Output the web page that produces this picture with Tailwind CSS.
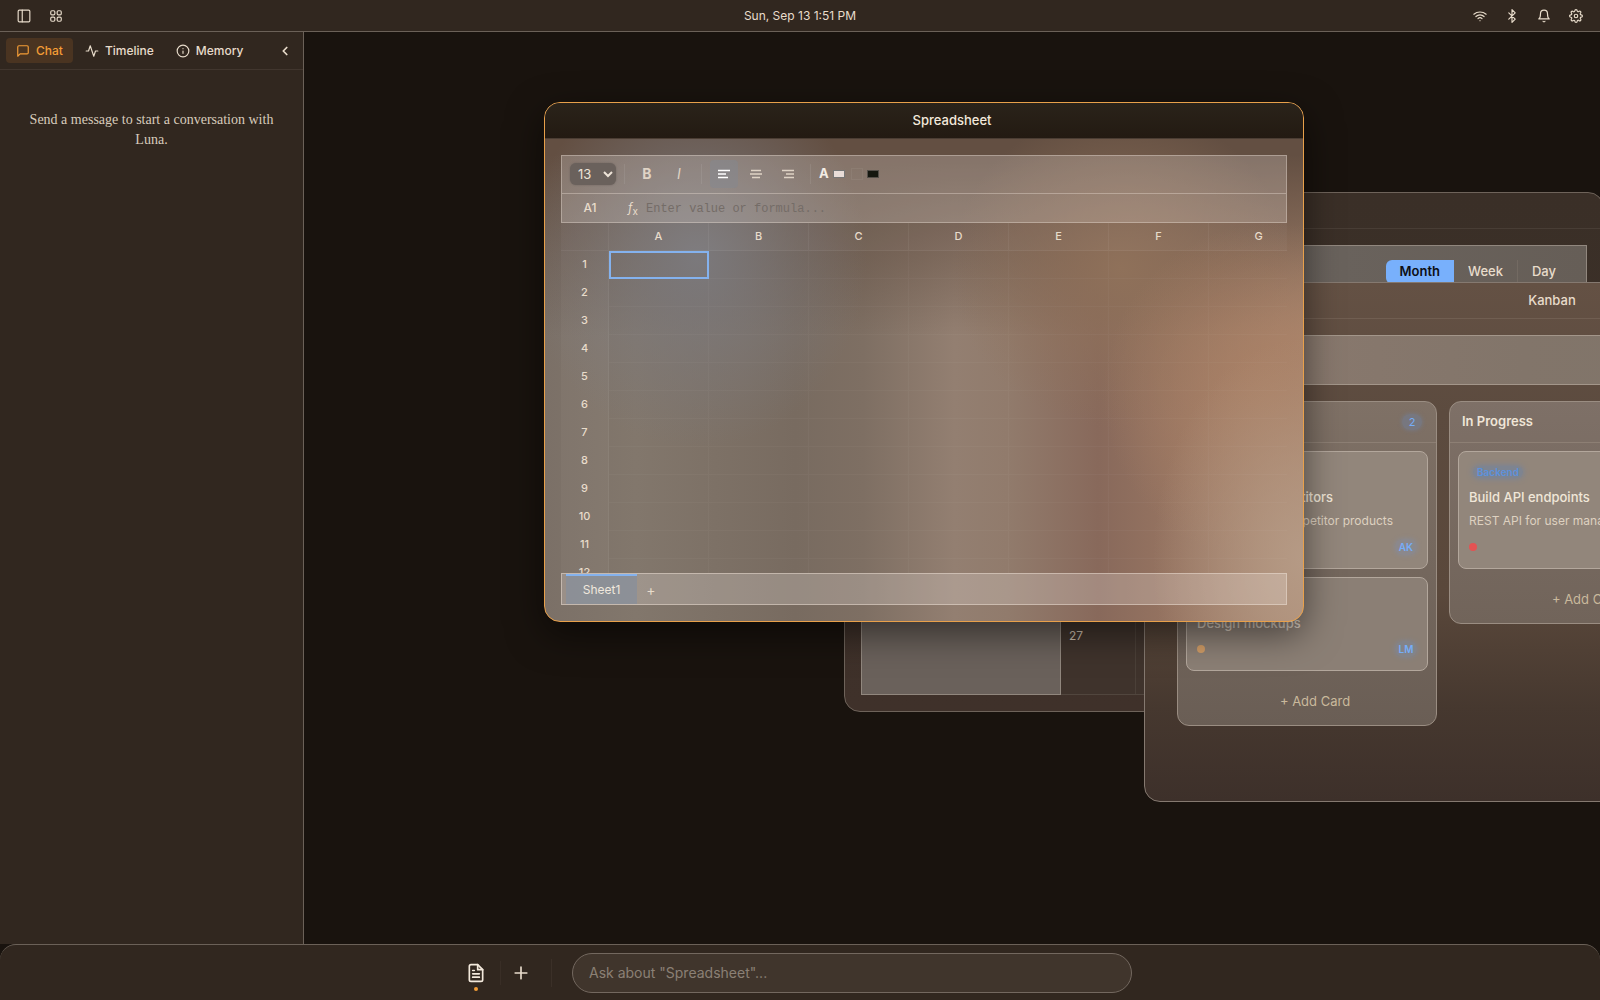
<!DOCTYPE html>
<html lang="en">
<head>
    <meta charset="UTF-8">
    <meta name="viewport" content="width=device-width, initial-scale=1.0">
    <title>Luna</title>
    <script src="https://cdn.jsdelivr.net/npm/@tailwindcss/browser@4"></script>
</head>
<body class="h-screen flex flex-col overflow-hidden bg-[#19130e] text-[#e8dccb] font-['Inter',sans-serif] text-[13px]">

<!-- Menu bar -->
<header class="h-8 shrink-0 grid grid-cols-3 items-center px-4 bg-[#31271f] border-b border-[#6b6158]">
    <div class="flex gap-4">
        <button aria-label="Toggle sidebar" class="size-4 grid place-items-center">
            <svg class="size-3.5" fill="none" stroke="currentColor" stroke-width="2" stroke-linecap="round" stroke-linejoin="round" viewBox="0 0 24 24"><rect x="2" y="2" width="20" height="20" rx="2"/><path d="M9 2v20"/></svg>
        </button>
        <button aria-label="Apps" class="size-4 grid place-items-center">
            <svg class="size-3.5" fill="none" stroke="currentColor" stroke-width="2" viewBox="0 0 24 24"><rect x="3" y="3" width="7" height="7" rx="2"/><rect x="14" y="3" width="7" height="7" rx="2"/><rect x="3" y="14" width="7" height="7" rx="2"/><rect x="14" y="14" width="7" height="7" rx="2"/></svg>
        </button>
    </div>
    <time class="text-center text-xs">Sun, Sep 13 1:51 PM</time>
    <div class="flex justify-end gap-4">
        <button aria-label="Wi-Fi" class="size-4 grid place-items-center">
            <svg class="size-3.5" fill="none" stroke="currentColor" stroke-width="2" stroke-linecap="round" viewBox="0 0 24 24"><path d="M1.500 9a16 16 0 0 1 21 0"/><path d="M5 12.900a10 10 0 0 1 14 0"/><path d="M8.500 16.400a5 5 0 0 1 7 0"/><path d="M12 20h.01"/></svg>
        </button>
        <button aria-label="Bluetooth" class="size-4 grid place-items-center">
            <svg class="size-3.5" fill="none" stroke="currentColor" stroke-width="2" stroke-linecap="round" stroke-linejoin="round" viewBox="0 0 24 24"><path d="m6.500 6.500 11 11L12 23V1l5.500 5.500-11 11"/></svg>
        </button>
        <button aria-label="Notifications" class="size-4 grid place-items-center">
            <svg class="size-3.5" fill="none" stroke="currentColor" stroke-width="2" stroke-linecap="round" stroke-linejoin="round" viewBox="0 0 24 24"><path d="M18 8A6 6 0 0 0 6 8c0 7-3 9-3 9h18s-3-2-3-9"/><path d="M13.700 21a2 2 0 0 1-3.400 0"/></svg>
        </button>
        <button aria-label="Settings" class="size-4 grid place-items-center">
            <svg class="size-3.5" fill="none" stroke="currentColor" stroke-width="2" stroke-linejoin="round" viewBox="0 0 24 24"><circle cx="12" cy="12" r="3"/><path d="M19.4 15a1.65 1.65 0 0 0 .33 1.82l.06.06a2 2 0 0 1 0 2.83 2 2 0 0 1-2.83 0l-.06-.06a1.65 1.65 0 0 0-1.82-.33 1.65 1.65 0 0 0-1 1.51V21a2 2 0 0 1-2 2 2 2 0 0 1-2-2v-.09A1.65 1.65 0 0 0 9 19.4a1.65 1.65 0 0 0-1.82.33l-.06.06a2 2 0 0 1-2.83 0 2 2 0 0 1 0-2.83l.06-.06a1.65 1.65 0 0 0 .33-1.82 1.65 1.65 0 0 0-1.51-1H3a2 2 0 0 1-2-2 2 2 0 0 1 2-2h.09A1.65 1.65 0 0 0 4.6 9a1.65 1.65 0 0 0-.33-1.82l-.06-.06a2 2 0 0 1 0-2.83 2 2 0 0 1 2.83 0l.06.06a1.65 1.65 0 0 0 1.82.33H9a1.65 1.65 0 0 0 1-1.51V3a2 2 0 0 1 2-2 2 2 0 0 1 2 2v.09a1.65 1.65 0 0 0 1 1.51 1.65 1.65 0 0 0 1.82-.33l.06-.06a2 2 0 0 1 2.83 0 2 2 0 0 1 0 2.83l-.06.06a1.65 1.65 0 0 0-.33 1.82V9a1.65 1.65 0 0 0 1.51 1H21a2 2 0 0 1 2 2 2 2 0 0 1-2 2h-.09a1.65 1.65 0 0 0-1.51 1z"/></svg>
        </button>
    </div>
</header>

<div class="flex flex-1 min-h-0">
    <!-- Sidebar -->
    <aside class="w-76 shrink-0 bg-[#31271f] border-r border-[#6b6158]">
        <nav class="flex items-center gap-0.5 p-1.5 border-b border-[#41362e] text-xs font-medium">
            <button class="flex items-center gap-1.5 px-2.5 h-[25px] rounded bg-[#4a3421] text-[#f39c36]">
                <svg class="size-3.5" fill="none" stroke="currentColor" stroke-width="2" stroke-linejoin="round" viewBox="0 0 24 24"><path d="M21 15a2 2 0 0 1-2 2H7l-4 4V5a2 2 0 0 1 2-2h14a2 2 0 0 1 2 2z"/></svg>
                Chat
            </button>
            <button class="flex items-center gap-1.5 px-2.5 h-[25px] rounded">
                <svg class="size-3.5" fill="none" stroke="currentColor" stroke-width="2" stroke-linecap="round" stroke-linejoin="round" viewBox="0 0 24 24"><path d="M22 12h-4l-3 9L9 3l-3 9H2"/></svg>
                Timeline
            </button>
            <button class="flex items-center gap-1.5 px-2.5 h-[25px] rounded">
                <svg class="size-3.5" fill="none" stroke="currentColor" stroke-width="2" stroke-linecap="round" viewBox="0 0 24 24"><circle cx="12" cy="12" r="10"/><path d="M12 16v-4M12 8h.01"/></svg>
                Memory
            </button>
            <button aria-label="Collapse" class="ml-auto size-6 grid place-items-center">
                <svg class="size-3.5" fill="none" stroke="currentColor" stroke-width="3" stroke-linecap="round" stroke-linejoin="round" viewBox="0 0 24 24"><path d="m15 18-6-6 6-6"/></svg>
            </button>
        </nav>
        <p class="px-6 pt-10 text-center text-sm leading-5 text-[#d8ccbc] font-['Liberation_Serif',serif]">Send a message to start a conversation with Luna.</p>
    </aside>

    <!-- Desktop -->
    <main class="relative flex-1 overflow-hidden">

        <!-- Calendar window -->
        <section class="absolute left-[540px] top-40 w-[760px] h-[520px] flex flex-col rounded-2xl overflow-hidden border border-[#6e635a] bg-linear-to-b from-[#3a2f27] to-[#3f312a]">
            <div class="h-9 shrink-0 border-b border-[#483d35]"></div>
            <div class="flex-1 flex flex-col p-4">
                <div class="h-[52px] shrink-0 flex justify-end items-center px-4 pt-0.5 border border-[#91877e] bg-linear-to-r from-[#6f6a66] to-[#665e57]">
                    <div class="flex h-6 rounded-md overflow-hidden font-medium text-[#e8dccb]">
                        <button class="px-3.5 bg-[#78b0fc] text-[#0d0f14] font-semibold">Month</button>
                        <button class="px-3.5">Week</button>
                        <button class="px-3.5 border-l border-[#736a62]">Day</button>
                    </div>
                </div>
                <div class="flex-1 flex">
                    <div class="w-50 border border-[#91877e] bg-[#6a615b]"></div>
                    <div class="flex-1 grid grid-cols-7 items-end border-b border-[#51463e] bg-[#3f332c]">
                        <div class="h-[76px] px-2 py-2.5 border-r border-[#4b4038] text-xs text-[#cbbfae]">27</div>
                    </div>
                </div>
            </div>
        </section>

        <!-- Kanban window -->
        <section class="absolute left-[840px] top-[250px] w-[760px] h-[520px] flex flex-col rounded-2xl overflow-hidden border border-[#857970] bg-[linear-gradient(180deg,#645144_0%,#5c4b3f_25%,#5a483b_60%,#46382f_82%,#3d302a_100%)]">
            <div class="h-9 shrink-0 pl-14 grid place-items-center border-b border-[#705e51] font-medium">Kanban</div>
            <div class="flex-1 flex flex-col p-4">
                <div class="h-[50px] shrink-0 border border-[#a3968a] bg-linear-to-r from-[#8c7a6f] via-[#82756a] to-[#7e7468]"></div>
                <div class="flex items-start gap-3 p-4">
                    <div class="w-65 shrink-0 rounded-xl border border-[#9a8d82] bg-linear-to-b from-[#7f7166] to-[#6a5e55]">
                        <div class="h-[41px] flex items-center justify-between px-3 border-b border-[#8d7f74]">
                            <h3 class="font-semibold text-[#f0e6d8]">To Do</h3>
                            <span class="w-5 mr-0.5 rounded-full text-center text-[11px] leading-4 bg-[#757a8a]/70 shadow-[0_0_4px_#757a8a] text-[#76adf8]">2</span>
                        </div>
                        <div class="flex flex-col gap-2 p-2">
                            <article class="p-2.5 rounded-lg border border-[#b3a79c] bg-[#92867b]">
                                <div class="h-5"></div>
                                <h4 class="mt-1.5 leading-[18px] font-medium text-[#f0e6d8]">Research competitors</h4>
                                <p class="mt-1.5 text-xs leading-[18px] text-[#ded1c0]">Analyze top 5 competitor products</p>
                                <div class="mt-1.5 h-[22px] flex items-center justify-between">
                                    <span class="size-2 rounded-full bg-[#78b0fc]"></span>
                                    <span class="w-[22px] text-center text-[10px] leading-4 rounded-full font-semibold bg-[#878b98]/60 shadow-[0_0_5px_#878b98] text-[#76adf8]">AK</span>
                                </div>
                            </article>
                            <article class="p-2.5 rounded-lg border border-[#b3a79c] bg-[#8b7f75]">
                                <div class="h-5"></div>
                                <h4 class="mt-1.5 leading-[18px] font-medium text-[#d4c8bb]">Design mockups</h4>
                                <div class="mt-1.5 h-[22px] flex items-center justify-between">
                                    <span class="size-2 rounded-full bg-[#d09c66]"></span>
                                    <span class="w-[22px] text-center text-[10px] leading-4 rounded-full font-semibold bg-[#7f8694]/60 shadow-[0_0_5px_#7f8694] text-[#76adf8]">LM</span>
                                </div>
                            </article>
                        </div>
                        <button class="w-full h-[46px] pl-4 text-[#c9b99c]">+ Add Card</button>
                    </div>
                    <div class="w-65 shrink-0 rounded-xl border border-[#9a8d82] bg-linear-to-b from-[#7e7067] to-[#71645a]">
                        <div class="h-[41px] flex items-center justify-between px-3 border-b border-[#8d7f74]">
                            <h3 class="font-semibold text-[#f0e6d8]">In Progress</h3>
                        </div>
                        <div class="flex flex-col gap-2 p-2">
                            <article class="p-2.5 rounded-lg border border-[#b3a79c] bg-[#92867b]">
                                <div class="h-5 flex items-center">
                                    <span class="ml-1 px-1 rounded-full text-[10px] leading-3 font-semibold bg-[#71839f]/60 shadow-[0_0_6px_#71839f] text-[#5c91dc]">Backend</span>
                                </div>
                                <h4 class="mt-1.5 leading-[18px] font-medium text-[#f0e6d8]">Build API endpoints</h4>
                                <p class="mt-1.5 text-xs leading-[18px] text-[#ded1c0] whitespace-nowrap">REST API for user management</p>
                                <div class="mt-1.5 h-[22px] flex items-center">
                                    <span class="size-2 rounded-full bg-[#e35353]"></span>
                                </div>
                            </article>
                        </div>
                        <button class="w-full h-[46px] pl-4 text-[#c9b99c]">+ Add Card</button>
                    </div>
                </div>
            </div>
        </section>

        <!-- Spreadsheet window -->
        <section class="absolute left-60 top-[70px] w-[760px] h-[520px] flex flex-col rounded-2xl overflow-hidden border border-[#e8a04a] shadow-[0_12px_36px_rgba(0,0,0,0.5)] bg-[radial-gradient(ellipse_170px_190px_at_20%_30%,#7b797c_0%,#7b797c00_100%),radial-gradient(ellipse_150px_220px_at_100%_88%,#b59a85_0%,#b59a8500_100%),radial-gradient(ellipse_170px_170px_at_96%_56%,#a98065_0%,#a9806500_100%),radial-gradient(ellipse_170px_160px_at_76%_32%,#8f715a_0%,#8f715a00_100%),linear-gradient(180deg,#634f42_0%,#634f42_10%,#634f4200_45%),linear-gradient(90deg,#7b7067_0%,#82776c_12%,#786b60_33%,#7e6f63_42%,#937f71_54%,#917b6c_61%,#88695b_73%,#967461_83%,#a98770_100%)]">
            <div class="h-9 shrink-0 pl-14 grid place-items-center border-b border-[#4b3d33] bg-linear-to-b from-[#2a231a] to-[#231a12] font-medium text-[#f3e9dc]">Spreadsheet</div>
            <div class="flex-1 min-h-0 flex flex-col p-4">
                <div class="border border-[#e9ddd2]/40 bg-[#f3ece8]/24">
                    <div class="h-[38px] flex items-center gap-1 px-2 pb-0.5 border-b border-[#e9ddd2]/40">
                        <select aria-label="Font size" class="w-[46px] h-[22px] pl-1 rounded-md bg-[#6a615c] text-[#eee4d8] text-[13px] shadow-[0_0_2px_#6a615c]">
                            <option>13</option>
                        </select>
                        <span class="mx-1 w-px h-5 bg-white/8"></span>
                        <button class="size-7 font-bold text-sm text-[#dfd3c5]">B</button>
                        <button class="size-7 italic text-sm text-[#dfd3c5]">I</button>
                        <span class="mx-1 w-px h-5 bg-white/8"></span>
                        <button aria-label="Align left" class="size-7 grid place-items-center rounded bg-[#83878f]/50">
                            <svg class="size-3.5" stroke="#fff" stroke-width="1.500" viewBox="0 0 14 14"><path d="M1 3.500h12M1 7h8M1 10.500h10"/></svg>
                        </button>
                        <button aria-label="Align center" class="size-7 grid place-items-center">
                            <svg class="size-3.5" stroke="#dfd3c5" stroke-width="1.500" viewBox="0 0 14 14"><path d="M2 3.500h10M1 7h12M3 10.500h8"/></svg>
                        </button>
                        <button aria-label="Align right" class="size-7 grid place-items-center">
                            <svg class="size-3.5" stroke="#dfd3c5" stroke-width="1.500" viewBox="0 0 14 14"><path d="M1 3.500h12M5 7h8M3 10.500h10"/></svg>
                        </button>
                        <span class="mx-1 w-px h-5 bg-white/8"></span>
                        <label class="flex items-center gap-1 font-bold text-[#f3ece4]">A
                            <input type="color" value="#e8dcd8" class="w-3 h-2 appearance-none [&::-webkit-color-swatch-wrapper]:p-0 [&::-webkit-color-swatch]:border [&::-webkit-color-swatch]:border-[#767676]">
                        </label>
                        <label aria-label="Fill color" class="flex items-center gap-1 ml-0.5">
                            <span class="size-3 border border-white/5"></span>
                            <input type="color" value="#15170f" class="w-3 h-2 appearance-none [&::-webkit-color-swatch-wrapper]:p-0 [&::-webkit-color-swatch]:border [&::-webkit-color-swatch]:border-[#55504a]">
                        </label>
                    </div>
                    <div class="h-7 flex items-center">
                        <span class="w-14 text-center text-xs font-medium">A1</span>
                        <label for="formula" class="w-7 pl-2.5 text-xs italic">f<sub class="not-italic text-[10px]">x</sub></label>
                        <input id="formula" placeholder="Enter value or formula..." class="flex-1 min-w-0 pt-0.5 outline-none font-['Liberation_Mono',monospace] text-xs placeholder:text-[#746c67]">
                    </div>
                </div>
                <div class="flex-1 min-h-0 overflow-hidden">
                    <table class="w-[1048px] table-fixed border-separate border-spacing-0 text-[11px]">
                        <thead>
                            <tr id="cols" class="h-7 bg-white/3">
                                <th class="w-12 border-r border-b border-white/5"></th>
                            </tr>
                        </thead>
                        <tbody id="rows"></tbody>
                    </table>
                </div>
                <div class="h-8 shrink-0 flex px-1 border border-[#eee0d4]/50 bg-[#f3ece8]/25 text-xs">
                    <button class="w-[71px] border-t-2 border-[#84b2ee] bg-[#8a8f99]/85 text-[#f0e8dd]">Sheet1</button>
                    <button aria-label="Add sheet" class="w-7 pt-0.5 text-sm">+</button>
                </div>
            </div>
        </section>
    </main>
</div>

<!-- Dock -->
<footer class="h-14 shrink-0 flex items-center justify-center gap-5 pr-3 rounded-t-2xl bg-[#31271f] border-t border-[#6b6158]">
    <div class="flex items-center">
        <button aria-label="Spreadsheet" class="relative size-10 grid place-items-center text-[#f3e9dc]">
            <svg class="size-5" fill="none" stroke="currentColor" stroke-width="2" stroke-linecap="round" stroke-linejoin="round" viewBox="0 0 24 24"><path d="M14 2H6a2 2 0 0 0-2 2v16a2 2 0 0 0 2 2h12a2 2 0 0 0 2-2V8z"/><path d="M14 2v6h6M16 13H8M16 17H8M10 9H8"/></svg>
            <span class="absolute bottom-0.5 size-1 rounded-full bg-[#f39c36]"></span>
        </button>
        <span class="ml-1 w-px h-6 bg-[#392e26]"></span>
        <button aria-label="New" class="size-10 grid place-items-center">
            <svg class="size-5" fill="none" stroke="currentColor" stroke-width="2" stroke-linecap="round" viewBox="0 0 24 24"><path d="M12 5v14M5 12h14"/></svg>
        </button>
        <span class="ml-2.5 w-px h-7 bg-[#3b3028]"></span>
    </div>
    <input aria-label="Ask Luna" placeholder="Ask about &quot;Spreadsheet&quot;..." class="w-[560px] h-10 px-4 rounded-full border border-[#73685f] bg-[#40352c] text-sm outline-none placeholder:text-[#8b8075]">
</footer>

<script>
    const cols = document.getElementById('cols');
    const rows = document.getElementById('rows');
    const letters = ['A', 'B', 'C', 'D', 'E', 'F', 'G', 'H', 'I', 'J'];

    letters.forEach(letter => {
        cols.innerHTML += `<th class="w-[100px] border-r border-b border-white/5 font-medium">${letter}</th>`;
    });

    for (let r = 1; r <= 15; r++) {
        let html = `<tr class="h-7"><th class="pb-0.5 border-r border-white/5 bg-white/3 font-medium">${r}</th>`;
        letters.forEach((letter, i) => {
            const active = r === 1 && i === 0;
            html += `<td class="${active ? 'border-2 border-[#84b2ee]' : 'border-r border-b border-white/3'}"></td>`;
        });
        rows.innerHTML += html + '</tr>';
    }
</script>
</body>
</html>
